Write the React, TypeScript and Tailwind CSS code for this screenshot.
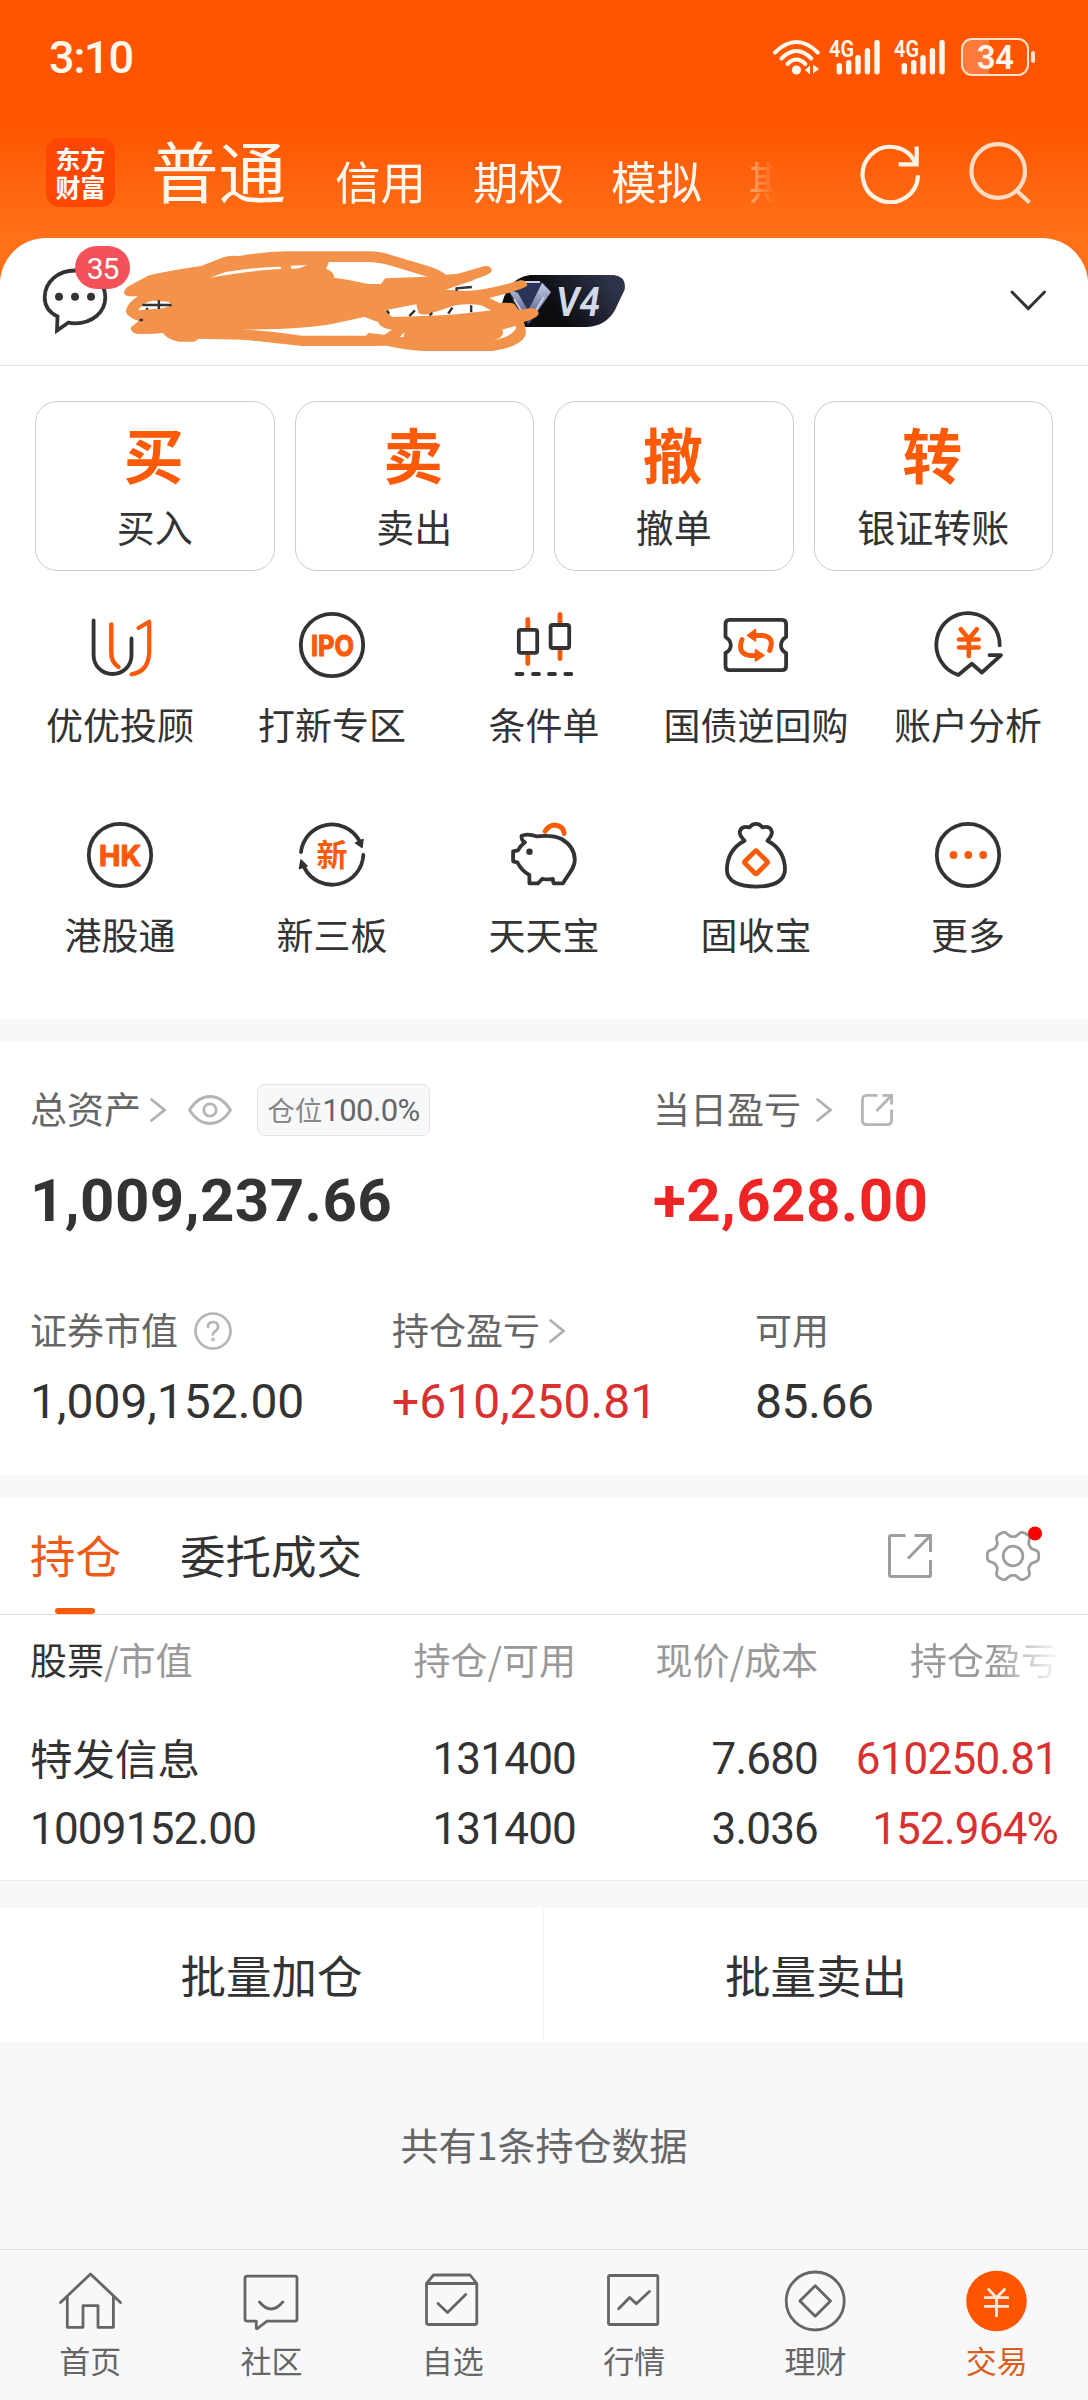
import type { ReactNode } from 'react';

const DARK = '#333333';
const ORANGE = '#fb5a0b';

function Signal() {
  return (
    <svg className="w-[52px] h-[38px]" viewBox="0 0 52 38" fill="#fff8ee">
      <text x="0" y="18.5" fontFamily="Roboto" fontWeight="600" fontSize="23" textLength="25" lengthAdjust="spacingAndGlyphs">4G</text>
      <rect x="7.6" y="25" width="5.4" height="11.4" rx="2.7" />
      <rect x="17" y="22" width="5.4" height="14.4" rx="2.7" />
      <rect x="26.3" y="17" width="5.4" height="19.4" rx="2.7" />
      <rect x="35.7" y="10" width="5.4" height="26.4" rx="2.7" />
      <rect x="45.3" y="1.7" width="5.4" height="34.7" rx="2.7" />
    </svg>
  );
}

function StatusBar() {
  return (
    <div className="h-[114px] flex items-center pl-[49px] pr-[54px] text-[#fff8ee]">
      <span className="font-['Roboto'] font-medium text-[45px] leading-none tracking-[-1.2px]">3:10</span>
      <svg className="ml-auto w-[48px] h-[38px] mr-[9px]" viewBox="0 0 48 38" fill="none" stroke="#fff8ee" strokeWidth="4" strokeLinecap="round">
        <path d="M3 14.5Q24.4 -6.5 45.8 14.5" />
        <path d="M9.5 20.5Q24.4 5.5 39.3 20.5" />
        <path d="M15.5 26Q24.4 17 33.3 26" />
        <circle cx="24.4" cy="32" r="4.6" fill="#fff8ee" stroke="none" />
        <path d="M33 32l5 -4.5v9zM47 31l-6 -4.5v9z" fill="#fff8ee" stroke="none" />
      </svg>
      <Signal />
      <span className="w-[13px]" />
      <Signal />
      <div className="ml-[15px] w-[68px] h-[38px] rounded-[11px] border-[2.5px] border-[#ffe3d0] flex items-center justify-center bg-linear-to-r from-[#ff7a3d] from-40% to-transparent to-40%">
        <span className="font-['Roboto'] font-semibold text-[33px] leading-none tracking-[-0.5px]">34</span>
      </div>
      <span className="ml-[2px] -mr-[1px] w-[4px] h-[12px] rounded-full bg-[#ffe3d0]" />
    </div>
  );
}

function Header() {
  return (
    <div className="h-[124px] flex pl-[46px]">
      <div className="mt-[24px] w-[69px] h-[69px] rounded-[14px] bg-[#ff4602] flex flex-col items-center justify-center pb-[2px] text-white font-bold text-[25px] leading-[28px]">
        <span>东方</span>
        <span>财富</span>
      </div>
      <div className="ml-[36px] h-[107px] pb-[10px] w-[623px] flex items-end text-[#fff8ee] overflow-hidden whitespace-nowrap mask-r-from-[565px] mask-r-to-[625px]">
        <span className="text-[67.5px] leading-[84px]">普通</span>
        <span className="ml-[49px] text-[45.5px] leading-[61px]">信用</span>
        <span className="ml-[47px] text-[45.5px] leading-[61px]">期权</span>
        <span className="ml-[47px] text-[45.5px] leading-[61px]">模拟</span>
        <span className="ml-[47px] text-[45.5px] leading-[61px]">期货</span>
      </div>
      <svg className="mt-[26px] ml-[84px] w-[64px] h-[64px]" viewBox="0 0 64 64" fill="none" stroke="#fff3e6" strokeWidth="4.2">
        <path d="M60 35.3A27.7 27.7 0 1 1 57.5 23" />
        <path d="M58.7 6.5V24.3H40.6" />
      </svg>
      <svg className="mt-[26px] ml-[45px] w-[68px] h-[68px]" viewBox="0 0 68 68" fill="none" stroke="#ffdcc4" strokeWidth="4.2">
        <circle cx="31.2" cy="31" r="26.8" />
        <path d="M50 51L62.5 62.5" />
      </svg>
    </div>
  );
}

function Scribble() {
  return (
    <svg className="absolute left-0 top-0 w-[544px] h-[127px]" viewBox="0 713 1568 381" preserveAspectRatio="none">
      <path
        fill="#f3924b"
        d="M370 858L430 825Q500 808 580 797L640 772Q660 764 688 767Q760 755 830 753H1060Q1100 753 1130 765Q1170 778 1240 799Q1268 808 1285 823L1320 820L1395 798Q1412 793 1418 810Q1416 823 1365 838L1362 856L1345 872Q1400 870 1500 840Q1516 838 1520 855Q1516 866 1410 893L1440 908Q1470 906 1482 910L1496 930L1530 923Q1552 925 1553 940Q1550 952 1510 965Q1517 985 1515 1005Q1500 1040 1420 1052H1220Q1160 1048 1115 1036L1060 1037H870L700 1018L573 1015L560 1024H515Q482 1018 470 998Q430 1002 392 1000Q374 994 378 980L400 962Q362 948 363 930Q370 905 398 888L370 888Q345 880 370 858Z"
      />
      <g fill="#ffffff">
        <path d="M605 832L650 815Q740 800 808 799L811 806Q740 808 605 832Z" />
        <path d="M838 796L885 794L865 803L840 806Z" />
        <path d="M948 785H1060Q1100 787 1130 797L1232 829L1110 834L1098 851L1062 851Q1010 838 963 832Q962 812 940 806Z" />
        <path d="M398 930Q415 905 440 901L485 904L497 914L470 924Z" />
        <path d="M1110 930L1200 912L1206 938Q1220 947 1245 938L1312 915Q1360 908 1390 916L1416 930Q1300 946 1240 946L1130 950Z" />
        <path d="M697 988Q870 987 960 970L1050 950L1090 965Q1096 985 1130 988L1108 1003L1062 998L1054 1006H870Q780 990 697 988Z" />
        <path d="M1447 988L1487 977V986Q1470 1012 1420 1020Q1460 1010 1447 988Z" />
        <path d="M1285 868L1313 858L1365 840L1362 858L1345 872Z" />
        <path d="M1152 1010L1166 996L1163 1010Z" />
      </g>
      <path fill="none" stroke="#333" strokeWidth="7" d="M410 914H495M458 900V926M424 922V928M402 959H412M1115 930L1122 940M1196 930L1180 947M1246 938L1238 945M1304 922L1292 940M1358 915V936M1316 872V864L1360 860" />
    </svg>
  );
}

function VipBadge() {
  return (
    <svg className="absolute left-[500px] top-[37px] w-[126px] h-[52px]" viewBox="0 0 126 52">
      <defs>
        <linearGradient id="vip" x1="0" x2="1" y1="0.3" y2="0">
          <stop offset="0.3" stopColor="#0d0d10" />
          <stop offset="0.85" stopColor="#2d3348" />
        </linearGradient>
        <linearGradient id="wing" x1="0" x2="0" y1="0" y2="1">
          <stop offset="0" stopColor="#c9cfe6" />
          <stop offset="1" stopColor="#3a4470" />
        </linearGradient>
      </defs>
      <path d="M30 0H114Q127 2 124.5 15L115 35Q106 51 87 52H8Q-3 38 4 22Q12 2 30 0Z" fill="url(#vip)" />
      <path d="M8 16L22 7H43L51 17L28 50Z" fill="#2a3358" />
      <path d="M8 14L18 18L28 36L36 20L42 8L51 17L29 49Z" fill="url(#wing)" />
      <path d="M22 7H40M14 24L26 44M44 22L32 42" stroke="#c8cfe8" strokeWidth="2" />
      <text x="56" y="40.5" fontFamily="Roboto" fontWeight="600" fontStyle="italic" fontSize="40" fill="#d3d9e8" textLength="44" lengthAdjust="spacingAndGlyphs">V4</text>
    </svg>
  );
}

function AccountRow() {
  return (
    <div className="relative h-[128px] border-b border-[#e2e2e2] bg-white rounded-t-[46px] flex items-start">
      <svg className="mt-[28px] ml-[40px] w-[70px] h-[70px]" viewBox="40 266 70 70" fill="none" stroke={DARK} strokeWidth="3.8">
        <path d="M57.5 316.5C48 312 44.7 305 44.7 297.3C44.7 282 58 270.5 75 270.5S105.3 282 105.3 297.3S92 323.3 75 323.3Q71 323.3 68.5 322.5L57 330.5Z" />
        <g fill={DARK} stroke="none">
          <circle cx="59" cy="296.8" r="4" />
          <circle cx="75" cy="296.8" r="4" />
          <circle cx="91" cy="296.8" r="4" />
        </g>
      </svg>
      <span className="absolute left-[75px] top-[8px] w-[55px] h-[43px] rounded-full bg-[#f5515b] text-white font-['Roboto'] text-[30px] leading-[45px] text-center tracking-[-1px]">35</span>
      <VipBadge />
      <Scribble />
      <svg className="mt-[50px] ml-auto mr-[41px] w-[38px] h-[24px]" viewBox="0 0 38 24" fill="none" stroke={DARK} strokeWidth="3" strokeLinecap="round">
        <path d="M3 4L19.3 20.5L35.5 4" />
      </svg>
    </div>
  );
}

const actions = [
  { mark: '买', label: '买入' },
  { mark: '卖', label: '卖出' },
  { mark: '撤', label: '撤单' },
  { mark: '转', label: '银证转账' },
];

function Glyph({ children }: { children: ReactNode }) {
  return (
    <svg className="w-[72px] h-[72px]" viewBox="0 0 72 72" fill="none" stroke={DARK} strokeWidth="3.8" strokeLinecap="round" strokeLinejoin="round">
      {children}
    </svg>
  );
}

const shortcuts: { label: string; icon: ReactNode }[] = [
  {
    label: '优优投顾',
    icon: (
      <>
        <path d="M9.6 11.5V46C9.6 57 18 65 28.5 65S47.5 57 47.5 46V29.5" />
        <path d="M27.3 15.5V44Q27.3 53 34.5 58" stroke={ORANGE} strokeWidth="4.5" />
        <path d="M54.5 19L65.2 12.8V44Q64 63 47.5 65.3" stroke={ORANGE} strokeWidth="4.2" />
      </>
    ),
  },
  {
    label: '打新专区',
    icon: (
      <>
        <circle cx="36" cy="36" r="31.2" />
        <text x="15" y="46.5" fontFamily="Inter" fontWeight="700" fontSize="28.5" fill={ORANGE} stroke={ORANGE} strokeWidth="1.2" textLength="43" lengthAdjust="spacingAndGlyphs">IPO</text>
      </>
    ),
  },
  {
    label: '条件单',
    icon: (
      <>
        <path d="M19.8 10.5V19M19.8 45.5V54.5M52 5.5V14M52 40.5V49.5" stroke={ORANGE} strokeWidth="4.8" />
        <rect x="10.8" y="20.8" width="18.4" height="23" rx="2" />
        <rect x="42.6" y="16" width="18.6" height="23" rx="2" />
        <path d="M8.5 65H14.5M25 65H31M41 65H47M57.3 65H63.3" />
      </>
    ),
  },
  {
    label: '国债逆回购',
    icon: (
      <>
        <path d="M9.5 10.8H62Q66.1 10.8 66.1 15V28Q61 31 61 36.2T66.1 44V57Q66.1 61.2 62 61.2H9.5Q5.5 61.2 5.5 57V44Q10.8 41 10.8 36.2T5.5 28V15Q5.5 10.8 9.5 10.8Z" />
        <path d="M49.7 41.5Q55 28 43 26.4H35M22 30.5Q17 44 29 46.4H36" stroke={ORANGE} strokeWidth="5" />
        <path d="M27.5 26.4L35.5 20.5V32ZM44 46.4L35.5 40.5V52Z" fill={ORANGE} stroke={ORANGE} strokeWidth="1.5" />
      </>
    ),
  },
  {
    label: '账户分析',
    icon: (
      <>
        <path d="M67.7 36.3A31.7 31.7 0 1 0 26.3 66L39.8 54.7L49.9 63.5L69 46.2H57.5" />
        <path d="M28.8 20.3L36.8 30L44.8 20.3M36.8 30V47M27 30.5H46.6M27 38.5H46.6" stroke={ORANGE} strokeWidth="4.6" />
      </>
    ),
  },
  {
    label: '港股通',
    icon: (
      <>
        <circle cx="36" cy="36" r="31.2" />
        <text x="15" y="46.7" fontFamily="Inter" fontWeight="700" fontSize="29" fill={ORANGE} stroke={ORANGE} strokeWidth="1.2" textLength="42" lengthAdjust="spacingAndGlyphs">HK</text>
      </>
    ),
  },
  {
    label: '新三板',
    icon: (
      <>
        <path d="M5 33A31.2 31.2 0 0 1 63 21M67.3 36A31.2 31.2 0 0 1 8.5 49" />
        <path d="M67 20.5L66 28.5L59.5 24ZM5 41L11 47L3.5 49.5Z" fill={DARK} strokeWidth="1.5" />
        <text x="20.5" y="47" fontFamily="'Noto Sans CJK SC'" fontWeight="700" fontSize="31" fill={ORANGE} stroke="none">新</text>
      </>
    ),
  },
  {
    label: '天天宝',
    icon: (
      <>
        <path d="M13.5 17Q19 14 28.4 17.3C42 16 48 17 53.6 20C62 25 66.8 32 66.8 41C66.8 49 61 54 55 64.3H45.5L44.8 59.8Q38 61 34.3 59.8L30.2 64.3H21.4V56Q14 52 9.3 43.3L5.1 42.3V32.3L10 31.3Q12 27 17 23.3Q13.5 22 13.5 17Z" />
        <circle cx="21.5" cy="32.7" r="3.2" fill={DARK} stroke="none" />
        <path d="M37 12.3Q41 6 47 6Q55.5 7 56.2 14.5" stroke={ORANGE} strokeWidth="4.8" />
      </>
    ),
  },
  {
    label: '固收宝',
    icon: (
      <>
        <path d="M24.5 21.7Q19.7 16.5 19.7 13.5Q20.5 6.5 29.5 8.3Q32 4.8 36 4.8T42.5 8.3Q51 6.5 51.9 13.5Q51.9 16.5 47.5 21.7Q65 31 65 51C64 63 52 67.6 36 67.6S7 63 6.9 51Q7 31 24.5 21.7Z" />
        <rect x="27.5" y="34.8" width="17" height="17" rx="1.5" transform="rotate(45 36 43.3)" stroke={ORANGE} strokeWidth="4.8" />
      </>
    ),
  },
  {
    label: '更多',
    icon: (
      <>
        <circle cx="36" cy="36" r="31.2" />
        <g fill={ORANGE} stroke="none">
          <circle cx="21.5" cy="36" r="3.9" />
          <circle cx="36.3" cy="36" r="3.9" />
          <circle cx="51.2" cy="36" r="3.9" />
        </g>
      </>
    ),
  },
];

function Chevron({ className }: { className: string }) {
  return (
    <svg className={`w-[18px] h-[28px] ${className}`} viewBox="0 0 18 28" fill="none" stroke="#b0b0b0" strokeWidth="2.8" strokeLinecap="round">
      <path d="M2.5 3.5L15.5 14L2.5 24.5" />
    </svg>
  );
}

function Assets() {
  return (
    <div className="h-[433px] bg-white pl-[30px] text-[#666]">
      <div className="flex h-[136px] items-center">
        <div className="w-[623px] flex items-center">
          <span className="pb-[3px] text-[37px] leading-none">总资产</span>
          <Chevron className="ml-[8px]" />
          <svg className="ml-[20px] w-[46px] h-[34px]" viewBox="0 0 46 34" fill="none" stroke="#b5b5b5" strokeWidth="2.8">
            <path d="M2.5 17Q11 3.5 23 3.5T43.5 17Q35 30.5 23 30.5T2.5 17Z" />
            <circle cx="23" cy="17" r="6.2" />
          </svg>
          <div className="ml-[24px] w-[173px] h-[52px] rounded-[8px] border border-[#e4e4e6] bg-[#f7f8fa] flex items-center justify-center">
            <span className="pb-[1px] text-[27.5px] leading-none text-[#888]">仓位</span>
            <span className="font-['Roboto'] text-[31px] leading-none tracking-[-0.5px]">100.0%</span>
          </div>
        </div>
        <span className="pb-[3px] text-[37px] leading-none">当日盈亏</span>
        <Chevron className="ml-[14px]" />
        <svg className="ml-[26px] w-[36px] h-[36px]" viewBox="0 0 36 36" fill="none" stroke="#b5b5b5" strokeWidth="2.8">
          <path d="M18.5 3.4H8Q3.4 3.4 3.4 8V28Q3.4 32.6 8 32.6H28Q32.6 32.6 32.6 28V17.5" />
          <path d="M23.5 3.4H32.6V12.5M32 4L17.5 19" />
        </svg>
      </div>
      <div className="flex h-[46px] items-center font-['Roboto'] font-bold text-[60px] leading-none tracking-[0.45px]">
        <span className="w-[623px] text-[#333]">1,009,237.66</span>
        <span className="text-[#ef2525]">+2,628.00</span>
      </div>
      <div className="mt-[84px] grid grid-cols-[362px_363px_1fr] h-[46px] items-center text-[37px] leading-none">
        <div className="flex items-center">
          <span className="pb-[3px]">证券市值</span>
          <svg className="ml-[15px] w-[40px] h-[40px]" viewBox="0 0 40 40" fill="none" stroke="#b5b5b5" strokeWidth="2.7" strokeLinecap="round">
            <circle cx="20" cy="20" r="17.5" />
            <path d="M15 16Q15 11 20 11T25 16Q25 18.5 22.5 20T20 23.5" />
            <circle cx="20" cy="28.5" r="0.7" />
          </svg>
        </div>
        <div className="flex items-center">
          <span className="pb-[3px]">持仓盈亏</span>
          <Chevron className="ml-[8px]" />
        </div>
        <div className="pb-[3px]">可用</div>
      </div>
      <div className="mt-[24px] grid grid-cols-[362px_363px_1fr] h-[46px] items-center font-['Roboto'] text-[48px] leading-none text-[#333]">
        <span>1,009,152.00</span>
        <span className="text-[#d93030]">+610,250.81</span>
        <span className="tracking-[-0.4px]">85.66</span>
      </div>
    </div>
  );
}

function gearPath() {
  // six rounded teeth around the hub
  const pts: string[] = [];
  for (let i = 0; i <= 144; i++) {
    const a = (i / 144) * Math.PI * 2;
    const r = 23 + 2.8 * Math.tanh(2.2 * Math.cos(6 * a)) - (Math.cos(6 * a) < -0.6 ? 0.8 : 0);
    pts.push(`${(30 + r * Math.cos(a)).toFixed(2)} ${(30 + r * Math.sin(a)).toFixed(2)}`);
  }
  return `M${pts.join('L')}Z`;
}

function Holdings() {
  return (
    <div className="bg-white">
      <div className="h-[117px] flex items-center pl-[30px] border-b border-[#dedede] text-[45.5px] leading-none text-[#333]">
        <div className="relative h-full flex items-center pb-[3px] text-[#f15a14]">
          持仓
          <span className="absolute left-[25px] bottom-0 w-[40px] h-[6px] rounded-full bg-[#fb5a0b]" />
        </div>
        <span className="ml-[59px] pb-[3px]">委托成交</span>
        <svg className="ml-auto w-[46px] h-[46px]" viewBox="0 0 46 46" fill="none" stroke="#9d9d9d" strokeWidth="3">
          <path d="M18.5 2.5H4Q2.5 2.5 2.5 4V42Q2.5 43.5 4 43.5H42.5Q43.5 43.5 43.5 42V27" />
          <path d="M27.5 2.5H43.5V19M43 3L21 25.5" />
        </svg>
        <svg className="ml-[50px] mr-[45px] w-[60px] h-[60px]" viewBox="0 0 60 60" fill="none" stroke="#9d9d9d" strokeWidth="2.8" strokeLinejoin="round">
          <path d={gearPath()} />
          <circle cx="30" cy="30" r="9.8" />
          <circle cx="52" cy="7.5" r="7" fill="#fd0000" stroke="none" />
        </svg>
      </div>
      <div className="grid grid-cols-[306px_240px_242px_240px] h-[92px] items-center pl-[30px] pb-[4px] text-[37px] leading-none text-[#999]">
        <span><span className="text-[#333]">股票</span>/市值</span>
        <span className="text-right">持仓/可用</span>
        <span className="text-right">现价/成本</span>
        <span className="text-right mask-r-from-[175px] mask-r-to-[245px]">持仓盈亏</span>
      </div>
      <div className="grid grid-cols-[306px_240px_242px_240px] h-[173px] pl-[30px] pt-[17px] grid-rows-[70px_70px] items-center text-[44px] leading-none tracking-[-0.8px] font-['Roboto'] text-[#333]">
        <span className="font-['Noto_Sans_CJK_SC'] text-[42.5px] tracking-normal pb-[4px]">特发信息</span>
        <span className="text-right">131400</span>
        <span className="text-right">7.680</span>
        <span className="text-right text-[#d93030]">610250.81</span>
        <span>1009152.00</span>
        <span className="text-right">131400</span>
        <span className="text-right">3.036</span>
        <span className="text-right text-[#d93030]">152.964%</span>
      </div>
    </div>
  );
}

const navItems: { label: string; active?: boolean; icon: ReactNode }[] = [
  {
    label: '首页',
    icon: <path d="M1.5 33.5L31.5 5L61.5 33.5M8.3 28V58.3H24V36.7H39V58.3H54.4V28" />,
  },
  {
    label: '社区',
    icon: <path d="M7 7.2H55Q57 7.2 57 9.2V50Q57 52.2 55 52.2H27L17.5 59.5H16.3V52.2H7Q5 52.2 5 50V9.2Q5 7.2 7 7.2ZM19.5 33Q31 47 42.8 33" />,
  },
  {
    label: '自选',
    icon: <path d="M5.5 14.5L12.5 6H49L55.8 14.5V53.5Q55.8 55.5 53.8 55.5H7.5Q5.5 55.5 5.5 53.5ZM5.5 14.5H55.8M17 34.5L26.5 43.5L44.7 25.5" />,
  },
  {
    label: '行情',
    icon: <path d="M7 6.5H53.5Q54.8 6.5 54.8 8V54Q54.8 55.5 53.5 55.5H7Q5.5 55.5 5.5 54V8Q5.5 6.5 7 6.5ZM15.6 39.7L26.7 28.5L33.3 34.8L46.4 22.5" />,
  },
  {
    label: '理财',
    icon: (
      <>
        <circle cx="31.2" cy="32" r="29" />
        <path d="M31.2 16.7L46.5 32L31.2 47.3L15.9 32Z" />
      </>
    ),
  },
  {
    label: '交易',
    active: true,
    icon: (
      <>
        <circle cx="31.5" cy="32" r="30.3" fill="#ff5500" stroke="none" />
        <path d="M22.8 19.5L31.5 28.7L40.3 19.5M31.5 28.7V48M19 28.7H44M19 37.3H44" stroke="#ffe9dc" strokeLinecap="butt" />
      </>
    ),
  },
];

function BottomNav() {
  return (
    <div className="h-[151px] border-t border-[#dfe1e5] bg-[#f8f8fb] grid grid-cols-6">
      {navItems.map(item => (
        <div key={item.label} className={`flex flex-col items-center pt-[19px] ${item.active ? 'text-[#d8601c]' : 'text-[#666]'}`}>
          <svg className="w-[64px] h-[64px]" viewBox="0 0 64 64" fill="none" stroke="#666" strokeWidth="2.8" strokeLinecap="round" strokeLinejoin="round">
            {item.icon}
          </svg>
          <span className="mt-[11px] mr-[1px] text-[31px] leading-none">{item.label}</span>
        </div>
      ))}
    </div>
  );
}

export default function App() {
  return (
    <div className="w-[1088px] h-[2400px] overflow-hidden bg-[#f7f8fa] flex flex-col font-['Noto_Sans_CJK_SC',sans-serif]">
      <div className="bg-linear-to-b from-[#ff5500] from-[125px] to-[#ff7018] to-[235px]">
        <StatusBar />
        <Header />
        <AccountRow />
      </div>

      <div className="h-[653px] bg-white">
        <div className="grid grid-cols-4 gap-[20px] px-[35px] pt-[35px]">
          {actions.map(a => (
            <div key={a.label} className="h-[170px] rounded-[22px] border border-[#cccccc] flex flex-col items-center">
              <span className="mt-[20px] mr-[2px] text-[60px] leading-[62px] font-bold text-[#fd5a08]">{a.mark}</span>
              <span className="mt-[22px] text-[38px] leading-[40px] text-[#333]">{a.label}</span>
            </div>
          ))}
        </div>
        <div className="mt-[38px] px-[14px] grid grid-cols-5 auto-rows-[210px]">
          {shortcuts.map(s => (
            <div key={s.label} className="flex flex-col items-center text-[#333]">
              <Glyph>{s.icon}</Glyph>
              <span className="mt-[23px] text-[37px] leading-[40px] whitespace-nowrap">{s.label}</span>
            </div>
          ))}
        </div>
      </div>

      <div className="h-[23px]" />
      <Assets />
      <div className="h-[23px]" />
      <Holdings />
      <div className="h-[28px] border-t border-[#ececee]" />

      <div className="h-[134px] bg-white grid grid-cols-2 text-[45.5px] leading-none text-[#333]">
        <div className="flex items-center justify-center border-r border-[#f2f2f4]">批量加仓</div>
        <div className="flex items-center justify-center">批量卖出</div>
      </div>

      <div className="flex-1 flex items-center justify-center pb-[3px] text-[38px] leading-none text-[#666]">共有1条持仓数据</div>
      <BottomNav />
    </div>
  );
}
